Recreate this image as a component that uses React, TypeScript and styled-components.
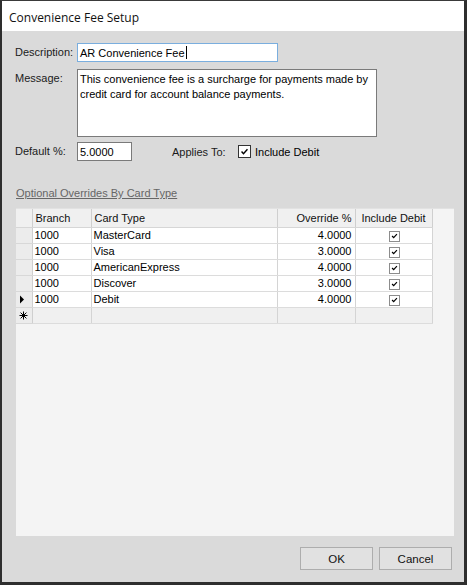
import React from 'react';
import styled, {createGlobalStyle} from 'styled-components';

const GlobalStyle = createGlobalStyle`
    body {
        margin: 0;
        font-family: "Liberation Sans", Arial, sans-serif;
        font-size: 11px;
        color: #000;
    }
`;

type Override = {
    branch: string;
    cardType: string;
    percent: string;
    includeDebit: boolean;
};

const overrides: Override[] = [
    {branch: '1000', cardType: 'MasterCard', percent: '4.0000', includeDebit: true},
    {branch: '1000', cardType: 'Visa', percent: '3.0000', includeDebit: true},
    {branch: '1000', cardType: 'AmericanExpress', percent: '4.0000', includeDebit: true},
    {branch: '1000', cardType: 'Discover', percent: '3.0000', includeDebit: true},
    {branch: '1000', cardType: 'Debit', percent: '4.0000', includeDebit: true},
];

const CheckGlyph = ({size}: {size: number}) => (
    <svg width={size} height={size} viewBox='0 0 13 13'>
        <path d='M3 6.5 L5.3 9 L10 3.8' fill='none' stroke='#000' strokeWidth='1.7' />
    </svg>
);

const RowArrow = () => (
    <svg width='6' height='9' viewBox='0 0 6 9'>
        <path d='M1 0.5 L5 4.5 L1 8.5 Z' fill='#000' />
    </svg>
);

const NewRowStar = () => (
    <svg width='9' height='9' viewBox='0 0 9 9'>
        <path
            d='M4.5 0.5 V8.5 M0.5 4.5 H8.5 M1.6 1.6 L7.4 7.4 M7.4 1.6 L1.6 7.4'
            stroke='#000'
            strokeWidth='1'
        />
    </svg>
);

const App = () => {
    return (
        <>
            <GlobalStyle />
            <Window>
                <TitleBar>Convenience Fee Setup</TitleBar>
                <Body>
                    <FieldRow>
                        <Label>Description:</Label>
                        <TextBox width={201} focused>
                            AR Convenience Fee
                            <Caret />
                        </TextBox>
                    </FieldRow>
                    <FieldRow gap={7}>
                        <Label>Message:</Label>
                        <MessageBox>
                            {'This convenience fee is a surcharge for payments made by\ncredit card for account balance payments.'}
                        </MessageBox>
                    </FieldRow>
                    <FieldRow gap={5}>
                        <Label>Default %:</Label>
                        <TextBox width={55}>5.0000</TextBox>
                        <AppliesLabel>Applies To:</AppliesLabel>
                        <CheckBox>
                            <CheckGlyph size={13} />
                        </CheckBox>
                        <CheckText>Include Debit</CheckText>
                    </FieldRow>

                    <SectionLink>Optional Overrides By Card Type</SectionLink>

                    <GridPanel>
                        <Grid>
                            <colgroup>
                                <col style={{width: 16}} />
                                <col style={{width: 59}} />
                                <col style={{width: 186}} />
                                <col style={{width: 78}} />
                                <col style={{width: 77}} />
                            </colgroup>
                            <thead>
                                <tr>
                                    <HeadCell />
                                    <HeadCell>Branch</HeadCell>
                                    <HeadCell>Card Type</HeadCell>
                                    <HeadCell align='right'>Override %</HeadCell>
                                    <HeadCell align='center'>Include Debit</HeadCell>
                                </tr>
                            </thead>
                            <tbody>
                                {overrides.map((row, i) => (
                                    <tr key={row.cardType}>
                                        <RowHeader>{i === overrides.length - 1 && <RowArrow />}</RowHeader>
                                        <Cell>{row.branch}</Cell>
                                        <Cell>{row.cardType}</Cell>
                                        <Cell align='right'>{row.percent}</Cell>
                                        <Cell align='center'>
                                            <GridCheck>{row.includeDebit && <CheckGlyph size={10} />}</GridCheck>
                                        </Cell>
                                    </tr>
                                ))}
                                <tr>
                                    <RowHeader>
                                        <NewRowStar />
                                    </RowHeader>
                                    <Cell blank />
                                    <Cell blank />
                                    <Cell blank />
                                    <Cell blank />
                                </tr>
                            </tbody>
                        </Grid>
                    </GridPanel>

                    <ButtonBar>
                        <DialogButton>OK</DialogButton>
                        <DialogButton>Cancel</DialogButton>
                    </ButtonBar>
                </Body>
            </Window>
        </>
    );
};

export default App;

const Window = styled.div`
    width: 467px;
    height: 585px;
    box-sizing: border-box;
    background-color: #dadada;
    border-top: 1px solid #3a3a3a;
    border-left: 2px solid #2e2e2e;
    border-right: 3px solid #2e2e2e;
    border-bottom: 3px solid #2e2e2e;
    display: flex;
    flex-direction: column;
`;

const TitleBar = styled.div`
    height: 30px;
    background-color: #fff;
    padding-left: 7px;
    display: flex;
    align-items: center;
    padding-top: 2px;
    box-sizing: border-box;
    font-family: "Open Sans", "Noto Sans", sans-serif;
    font-size: 12px;
    color: #111;
`;

const Body = styled.div`
    flex: 1;
    display: flex;
    flex-direction: column;
    padding: 12px 10px 0 13px;
`;

const FieldRow = styled.div<{gap?: number}>`
    display: flex;
    align-items: flex-start;
    margin-top: ${props => props.gap ?? 0}px;
`;

const Label = styled.div`
    width: 62px;
    padding-top: 3px;
    color: #1a1a1a;
`;

const TextBox = styled.div<{width: number; focused?: boolean}>`
    width: ${props => props.width}px;
    height: 19px;
    box-sizing: border-box;
    background-color: #fff;
    border: 1px solid ${props => (props.focused ? '#7aaede' : '#7a7a7a')};
    padding: 2px 0 0 2px;
    display: flex;
    align-items: flex-start;
    font-size: 11px;
    line-height: 14px;
    white-space: nowrap;
`;

const Caret = styled.span`
    display: inline-block;
    width: 1px;
    height: 13px;
    background-color: #000;
    margin-left: 1px;
`;

const MessageBox = styled.div`
    width: 300px;
    height: 68px;
    box-sizing: border-box;
    background-color: #fff;
    border: 1px solid #7a7a7a;
    padding: 2px 0 0 2px;
    white-space: pre;
    overflow: hidden;
    line-height: 15px;
    font-size: 11px;
`;

const AppliesLabel = styled.div`
    margin-left: 40px;
    width: 66px;
    padding-top: 4px;
    color: #1a1a1a;
`;

const CheckBox = styled.div`
    width: 13px;
    height: 13px;
    margin-top: 3px;
    box-sizing: border-box;
    border: 1px solid #333;
    background-color: #fff;
    display: flex;
    align-items: center;
    justify-content: center;
    svg {
        width: 11px;
        height: 11px;
    }
`;

const CheckText = styled.div`
    margin-left: 4px;
    padding-top: 4px;
    font-size: 11px;
`;

const SectionLink = styled.div`
    margin-top: 26px;
    margin-left: 1px;
    color: #666;
    text-decoration: underline;
    line-height: 13px;
`;

const GridPanel = styled.div`
    margin-top: 8px;
    margin-left: 1px;
    width: 438px;
    height: 328px;
    background-color: #f4f4f4;
    border-top: 1px solid #e2e2e2;
    box-sizing: border-box;
`;

const Grid = styled.table`
    border-collapse: collapse;
    table-layout: fixed;
    width: 416px;
`;

const HeadCell = styled.th<{align?: string}>`
    height: 18px;
    padding: 0 3px;
    font-weight: normal;
    text-align: ${props => props.align ?? 'left'};
    background-color: #f0f0f0;
    border-right: 1px solid #cfcfcf;
    border-bottom: 1px solid #d6d6d6;
    color: #111;
    white-space: nowrap;
`;

const RowHeader = styled.td`
    height: 15px;
    padding: 0 0 0 3px;
    background-color: #ececec;
    border-right: 1px solid #cfcfcf;
    border-bottom: 1px solid #d8d8d8;
    vertical-align: middle;
    line-height: 0;
`;

const Cell = styled.td<{align?: string; blank?: boolean}>`
    height: 15px;
    padding: 0 3px 0 2px;
    text-align: ${props => props.align ?? 'left'};
    background-color: ${props => (props.blank ? '#f0f0f0' : '#fff')};
    border-right: 1px solid #d4d4d4;
    border-bottom: 1px solid #dcdcdc;
    white-space: nowrap;
    line-height: 15px;
`;

const GridCheck = styled.span`
    display: inline-flex;
    width: 11px;
    height: 11px;
    box-sizing: border-box;
    border: 1px solid #8c8c8c;
    background-color: #fff;
    align-items: center;
    justify-content: center;
    vertical-align: middle;
    margin-left: 2px;
`;

const ButtonBar = styled.div`
    margin-top: 11px;
    display: flex;
    justify-content: flex-end;
    gap: 6px;
    padding-right: 2px;
`;

const DialogButton = styled.button`
    width: 73px;
    height: 23px;
    background-color: #e1e1e1;
    border: 1px solid #adadad;
    font-family: "Liberation Sans", Arial, sans-serif;
    font-size: 11.5px;
    color: #111;
    padding: 0;
`;
